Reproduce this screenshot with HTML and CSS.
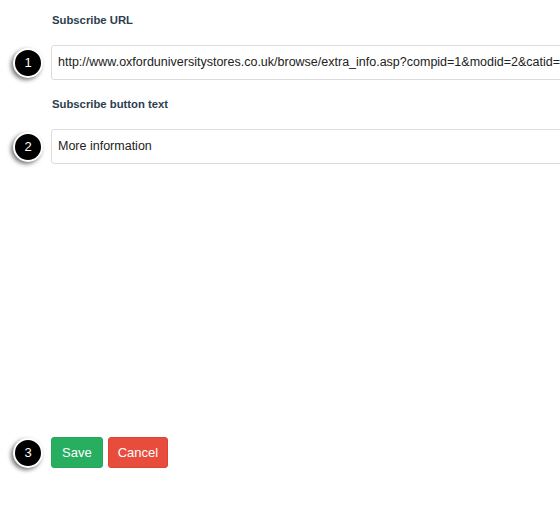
FILE: index.html
```html
<!DOCTYPE html>
<html>
<head>
<meta charset="utf-8">
<link rel="stylesheet" href="styles.css">
</head>
<body>
<div class="form">
  <div class="row">
    <div></div>
    <div class="label">Subscribe URL</div>
  </div>
  <div class="row field">
    <span class="badge">1</span>
    <div class="input">http://www.oxforduniversitystores.co.uk/browse/extra_info.asp?compid=1&amp;modid=2&amp;catid=</div>
  </div>
  <div class="row">
    <div></div>
    <div class="label">Subscribe button text</div>
  </div>
  <div class="row field">
    <span class="badge">2</span>
    <div class="input">More information</div>
  </div>
  <div class="row actions">
    <span class="badge">3</span>
    <div class="buttons">
      <button class="btn save">Save</button>
      <button class="btn cancel">Cancel</button>
    </div>
  </div>
</div>
</body>
</html>
```
FILE: styles.css
```css
html, body {
  margin: 0;
  padding: 0;
  background: #fff;
  overflow: hidden;
  font-family: "Liberation Sans", Arial, sans-serif;
}
.form {
  width: 560px;
  height: 514px;
  padding-top: 12px;
  box-sizing: border-box;
  overflow: hidden;
}
.row {
  display: grid;
  grid-template-columns: 51px 560px;
  align-items: center;
}
.label {
  font-size: 11.3px;
  font-weight: bold;
  color: #2c3e50;
  line-height: 16px;
  padding-left: 1px;
}
.field {
  margin-top: 17px;
  margin-bottom: 16px;
}
.input {
  height: 35px;
  box-sizing: border-box;
  border: 1px solid #dcdcdc;
  border-radius: 3px;
  padding: 0 6px;
  font-size: 12.5px;
  line-height: 33px;
  color: #222;
  white-space: nowrap;
  overflow: hidden;
}
.badge {
  justify-self: start;
  margin-left: 13px;
  width: 26px;
  height: 26px;
  border-radius: 50%;
  background: #000;
  border: 2px solid #fff;
  box-shadow: -2px 2px 4px rgba(0,0,0,0.55);
  color: #fff;
  font-size: 13px;
  line-height: 26px;
  text-align: center;
}
.actions {
  margin-top: 273px;
}
.buttons {
  display: flex;
  gap: 5px;
}
.btn {
  height: 31px;
  border: 1px solid transparent;
  border-radius: 3px;
  color: #fff;
  font-family: "Liberation Sans", Arial, sans-serif;
  font-size: 13px;
  padding: 0 10px;
}
.save {
  background: #27ae60;
  border-color: #26a65b;
}
.cancel {
  background: #e74c3c;
  border-color: #dc4535;
  padding: 0 9px;
}
```
